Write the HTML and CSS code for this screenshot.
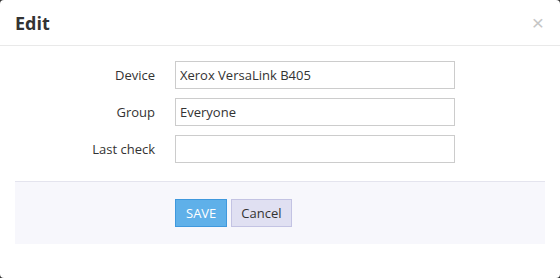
FILE: index.html
```html
<!DOCTYPE html>
<html>
<head>
    <title>Edit</title>
    <meta name="viewport" content="width=device-width, initial-scale=1.0">
    <link rel="stylesheet" href="styles.css">
</head>
<body>
    <div class="modal">
        <div class="modal-header">
            <h4 class="modal-title">Edit</h4>
            <button class="close-btn" type="button">&times;</button>
        </div>
        <div class="modal-body">
            <form class="edit-form">
                <label class="form-label" for="device">Device</label>
                <input class="form-input" id="device" type="text" value="Xerox VersaLink B405">
                <label class="form-label" for="group">Group</label>
                <input class="form-input" id="group" type="text" value="Everyone">
                <label class="form-label" for="last-check">Last check</label>
                <input class="form-input" id="last-check" type="text" value="">
            </form>
            <div class="modal-footer">
                <button class="btn btn-save" type="button">SAVE</button>
                <button class="btn btn-cancel" type="button">Cancel</button>
            </div>
        </div>
    </div>
</body>
</html>
```

FILE: styles.css
```css
html, body {
    margin: 0;
    padding: 0;
    height: 100%;
}
body {
    background-color: #333;
    font-family: "Open Sans", Arial, sans-serif;
    font-size: 13px;
    color: #333;
}
.modal {
    background-color: white;
    border-radius: 4px;
    height: 278px;
    box-sizing: border-box;
}
.modal-header {
    display: flex;
    justify-content: space-between;
    align-items: center;
    height: 45px;
    padding: 0 16px 0 15px;
    border-bottom: 1px solid #e9e9e9;
}
.modal-title {
    margin: 0;
    font-size: 18px;
    font-weight: bold;
    color: #333;
}
.close-btn {
    background: none;
    border: none;
    padding: 0;
    color: #c6c6c6;
    font-size: 21px;
    line-height: 1;
    cursor: pointer;
    font-family: Arial, sans-serif;
}
.modal-body {
    padding: 15px 15px 0;
}
.edit-form {
    display: grid;
    grid-template-columns: 140px 280px;
    column-gap: 20px;
    row-gap: 9px;
    align-items: center;
}
.form-label {
    text-align: right;
    color: #333;
}
.form-input {
    height: 28px;
    box-sizing: border-box;
    border: 1px solid #ccc;
    padding: 0 4px;
    font-family: inherit;
    font-size: 13px;
    color: #333;
    margin: 0;
}
.modal-footer {
    margin-top: 18px;
    padding: 17px 0 17px 160px;
    background-color: #f7f7fc;
    border-top: 1px solid #e4e4ee;
    display: flex;
    gap: 4px;
}
.btn {
    height: 28px;
    box-sizing: border-box;
    padding: 0 10px;
    font-family: inherit;
    font-size: 13px;
    cursor: pointer;
    border-radius: 0;
}
.btn-save {
    background-color: #5fb0e9;
    border: 1px solid #3f98dd;
    color: white;
}
.btn-cancel {
    background-color: #e0e0f2;
    border: 1px solid #c3c3e3;
    color: #333;
    padding: 0 9px;
}
```
